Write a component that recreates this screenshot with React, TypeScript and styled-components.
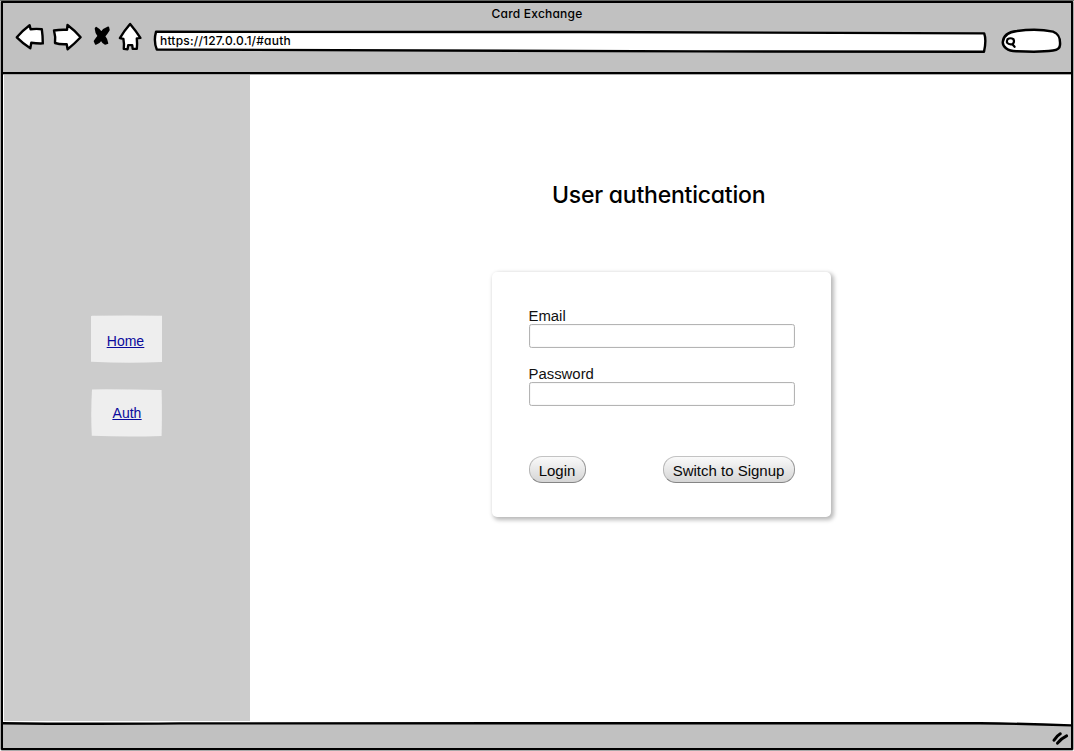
import React from "react";
import styled, { createGlobalStyle } from "styled-components";

const GlobalStyle = createGlobalStyle`
  * { box-sizing: border-box; }
  body { margin: 0; background: #fff; overflow: hidden; }
`;

const sketchFont = `"Inter", "Liberation Sans", sans-serif`;
const formFont = `"Liberation Sans", Arial, sans-serif`;

const Backdrop = styled.div`
  width: 1074px;
  height: 751px;
  padding: 1px;
  background: linear-gradient(#747974 0 1px, #fff 1px);
`;

const BrowserWindow = styled.div`
  display: flex;
  flex-direction: column;
  width: 1072px;
  height: 749px;
  border: 2px solid #000;
  border-radius: 1px;
  background: #fff;
  box-shadow: 0 0 0 0.5px #555;
`;

const Header = styled.header`
  flex: none;
  height: 71px;
  background: #c1c1c1;
  border-bottom: 2px solid #000;
  box-shadow: 0 0.5px 0 #555;
`;

const WindowTitle = styled.div`
  height: 22px;
  text-align: center;
  font: 500 12px/22px ${sketchFont};
  font-feature-settings: "cv11";
  letter-spacing: 0.2px;
`;

const Toolbar = styled.div`
  display: flex;
  align-items: flex-start;
`;

const NavIcons = styled.svg`
  flex: none;
  width: 150px;
  height: 40px;
  overflow: visible;
`;

const AddressBar = styled.div`
  display: grid;
  flex: none;
  width: 834px;
  height: 26px;
  margin-top: 3px;
`;

const FieldOutline = styled.svg`
  grid-area: 1 / 1;
  width: 100%;
  height: 100%;
`;

const Address = styled.span`
  grid-area: 1 / 1;
  padding-left: 7px;
  font: 500 12px/25px ${sketchFont};
  font-feature-settings: "cv11";
  letter-spacing: 0.2px;
  z-index: 1;
`;

const SearchField = styled.svg`
  flex: none;
  width: 64px;
  height: 30px;
  margin: 1px 0 0 12px;
`;

const Body = styled.div`
  display: flex;
  flex: 1;
  min-height: 0;
`;

const Sidebar = styled.nav`
  display: flex;
  flex-direction: column;
  align-items: flex-start;
  gap: 26px;
  width: 246px;
  height: 646px;
  margin: 1px 0 0 1px;
  padding: 240px 0 0 87px;
  background: #cccccc;
`;

const NavItem = styled.a`
  display: grid;
  width: 71px;
  height: 48px;
  place-items: center;
  color: #0a0a9c;
  font: 14px/20px ${formFont};
`;

const NavShape = styled.svg`
  grid-area: 1 / 1;
  width: 71px;
  height: 48px;
`;

const NavText = styled.span<{ $drop: number; $shift: number }>`
  grid-area: 1 / 1;
  z-index: 1;
  margin-top: ${(p) => p.$drop}px;
  padding-right: 2px;
  margin-left: ${(p) => p.$shift}px;
  text-decoration: underline;
  text-decoration-thickness: 1px;
`;

const Main = styled.main`
  display: flex;
  flex: 1;
  flex-direction: column;
  align-items: flex-start;
`;

const PageTitle = styled.h1`
  margin: 104px 0 0 302px;
  font: 500 23px/34px ${sketchFont};
  font-feature-settings: "cv11";
  letter-spacing: -0.22px;
  white-space: nowrap;
`;

const Card = styled.form`
  width: 339px;
  height: 245px;
  margin: 60px 0 0 242px;
  padding: 36px 36.5px 0 36.5px;
  border-radius: 5px;
  background: #fff;
  box-shadow: 2px 2px 4px 1px rgba(0, 0, 0, 0.28);
`;

const Field = styled.label`
  display: block;
  height: 58px;
  color: #111;
  font: 14.9px/16px ${formFont};
`;

const Input = styled.input`
  display: block;
  width: 266px;
  height: 23.5px;
  padding: 2px 4px;
  border: 1px solid #b4b4b4;
  border-radius: 2.5px;
  background: #fff;
  box-shadow: inset 0 0 1px #bbb;
  font: inherit;
`;

const Actions = styled.div`
  display: flex;
  justify-content: space-between;
  margin-top: 32px;
`;

const Button = styled.button<{ $width: number }>`
  width: ${(p) => p.$width}px;
  height: 27px;
  padding: 2px 0 0;
  border: 1px solid #8e8e8e;
  border-color: #c3c3c3 #949494 #858585 #b5b5b5;
  border-radius: 13px;
  background: linear-gradient(#fafafa, #d5d5d5);
  color: #080808;
  font: 15px/20px ${formFont};
  white-space: nowrap;
`;

const Footer = styled.footer`
  display: flex;
  flex: none;
  height: 26px;
`;

const FooterArt = styled.svg`
  width: 100%;
  height: 26px;
`;

function NavigationIcons() {
  return (
    <NavIcons viewBox="3 25 150 40" fill="#fff" stroke="#000" strokeWidth="2.4" strokeLinejoin="round" strokeLinecap="round">
      <path d="M16.8 37.3 Q23 30 29.6 25.2 L30.6 29.3 Q36 28.6 41.8 29.2 Q42.8 36 42.8 43.4 Q37 43.6 31.3 42.8 L30.3 48.2 Q23 43.6 16.8 37.3Z" />
      <path d="M54 30.5 Q60 29.4 67 29.8 L67.5 25 Q75 30.6 80.6 37.3 Q74.6 43.8 67.6 49.2 L66.7 44.2 Q60 44.6 55 43 Q55.8 37 54 30.5Z" />
      <path d="M96.2 27.8 Q99.7 29.6 101.4 32.6 Q104 28.6 108.2 27.3 L108.8 30 Q106.6 33.8 104.4 36.2 Q107.1 39.5 107.4 43.2 L105 43.8 Q102.9 42.6 101.2 39.7 Q99 43 95.8 43.9 L94.6 41.2 Q96.3 38.5 98.4 36 Q95.7 32.4 95.6 28.8Z" fill="#000" strokeWidth="1.8" />
      <path d="M130.1 24 Q136 31 140.4 37.9 L136.8 38.4 Q137.4 44 136.8 48.8 L132.7 48.9 132.2 45.1 128.2 45.1 127.6 49.2 123.8 48.9 Q124.4 44 123.4 38.9 L119.9 38.1 Q124 31 130.1 24Z" />
    </NavIcons>
  );
}

type NavLinkProps = { text: string; shape: string; drop: number; shift?: number };

function NavLink({ text, shape, drop, shift = 0 }: NavLinkProps) {
  return (
    <NavItem href="#">
      <NavShape viewBox="0 0 71 48" fill="#eeeeee">
        <path d={shape} />
      </NavShape>
      <NavText $drop={drop} $shift={shift}>{text}</NavText>
    </NavItem>
  );
}

export default function App() {
  return (
    <>
      <GlobalStyle />
      <Backdrop>
        <BrowserWindow>
          <Header>
            <WindowTitle>Card Exchange</WindowTitle>
            <Toolbar>
              <NavigationIcons />
              <AddressBar>
                <FieldOutline viewBox="153 28 834 26">
                  <path d="M156 31.8 Q360 31.2 580 32 L984.2 33.4 Q986.6 40 984 51.8 L700 51.4 Q450 50.4 156.8 49.5 Q153.4 41 156 31.8Z" fill="#fff" stroke="#000" strokeWidth="2.4" strokeLinejoin="round" />
                </FieldOutline>
                <Address>https://127.0.0.1/#auth</Address>
              </AddressBar>
              <SearchField viewBox="999 26 64 30" fill="none" stroke="#000" strokeWidth="2.5" strokeLinecap="round">
                <path d="M1017 31 C1030 29 1043 29.4 1053 31.6 C1059 34 1060.5 38 1060 45 C1059.8 49 1057 50 1053 50.6 C1040 52.4 1030 51.9 1017 51.2 C1007 51.5 1002.5 46 1002.8 42 C1003.3 35 1008 32 1017 31Z" fill="#fff" />
                <path d="M1007.5 39.2 Q1010.5 37.3 1013.5 39.2 Q1014.9 42.3 1012.4 44.2 Q1008.6 44.8 1007 42.7 Q1006.6 41 1007.5 39.2Z M1012.4 44.2 1014.6 46.8" strokeWidth="2.2" />
              </SearchField>
            </Toolbar>
          </Header>
          <Body>
            <Sidebar>
              <NavLink text="Home" drop={4} shape="M1 0.8 Q36 0.4 71 0.8 V47 Q38 48.5 0 46.8 V1.2Z" />
              <NavLink text="Auth" drop={0} shift={3} shape="M1 0.4 Q35 0.2 70.6 1 Q71.2 24 70.6 47 Q36 48.2 0.8 46.8 Q-0.4 24 1 0.4Z" />
            </Sidebar>
            <Main>
              <PageTitle>User authentication</PageTitle>
              <Card onSubmit={(e) => e.preventDefault()}>
                <Field>
                  Email
                  <Input type="email" />
                </Field>
                <Field>
                  Password
                  <Input type="password" />
                </Field>
                <Actions>
                  <Button type="submit" $width={57}>Login</Button>
                  <Button type="button" $width={132}>Switch to Signup</Button>
                </Actions>
              </Card>
            </Main>
          </Body>
          <Footer>
            <FooterArt viewBox="3 722 1068 26" preserveAspectRatio="none">
              <path d="M3 723.2 Q80 724.2 180 723.4 L980 723.2 Q1025 723.7 1071 725.4 V748 H3Z" fill="#c1c1c1" />
              <path d="M3 723.2 Q80 724.2 180 723.4 L980 723.2 Q1025 723.7 1071 725.4" fill="none" stroke="#000" strokeWidth="2.4" />
              <path d="M1054 740.2 Q1056.5 736 1060.3 733.8 M1057.5 743.2 Q1061.4 738.2 1066.6 735.8" fill="none" stroke="#000" strokeWidth="3" strokeLinecap="round" />
            </FooterArt>
          </Footer>
        </BrowserWindow>
      </Backdrop>
    </>
  );
}
